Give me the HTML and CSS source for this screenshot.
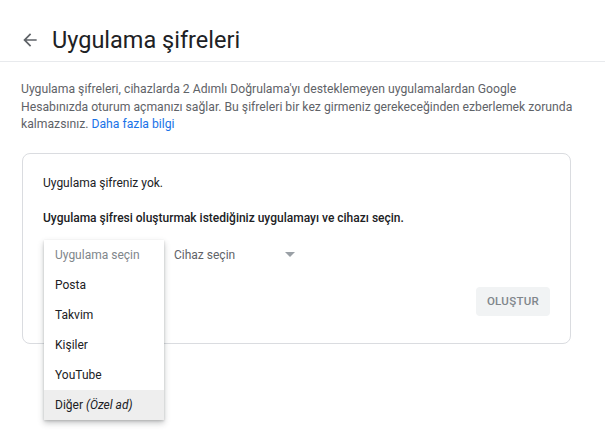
FILE: index.html
```html
<!DOCTYPE html>
<html lang="tr">
<head>
<meta charset="utf-8">
<title>Uygulama şifreleri</title>
<link rel="stylesheet" href="styles.css">
</head>
<body>
<header class="header">
  <svg class="back" width="20" height="20" viewBox="0 0 24 24" aria-hidden="true"><path d="M20 11H7.83l5.59-5.59L12 4l-8 8 8 8 1.41-1.41L7.83 13H20v-2z" fill="#5f6368"/></svg>
  <h1 class="title">Uygulama şifreleri</h1>
</header>
<main class="main">
  <p class="intro">Uygulama şifreleri, cihazlarda 2 Adımlı Doğrulama'yı desteklemeyen uygulamalardan Google Hesabınızda oturum açmanızı sağlar. Bu şifreleri bir kez girmeniz gerekeceğinden ezberlemek zorunda kalmazsınız. <a class="link" href="#">Daha fazla bilgi</a></p>
  <section class="card">
    <p class="none">Uygulama şifreniz yok.</p>
    <p class="prompt">Uygulama şifresi oluşturmak istediğiniz uygulamayı ve cihazı seçin.</p>
    <div class="selects">
      <div class="select app">
        <ul class="menu">
          <li class="item placeholder">Uygulama seçin</li>
          <li class="item">Posta</li>
          <li class="item">Takvim</li>
          <li class="item">Kişiler</li>
          <li class="item">YouTube</li>
          <li class="item active">Diğer <i>(Özel ad)</i></li>
        </ul>
      </div>
      <div class="select device">
        <span>Cihaz seçin</span>
        <span class="caret"></span>
      </div>
    </div>
    <div class="actions">
      <button class="btn" disabled>OLUŞTUR</button>
    </div>
  </section>
</main>
</body>
</html>
```
FILE: styles.css
```css
* { box-sizing: border-box; }
html, body { margin: 0; padding: 0; background: #fff; }
body { min-height: 431px; font-family: Roboto, "Noto Sans", Arial, sans-serif; color: #202124; }

.header {
  display: flex;
  align-items: center;
  height: 62px;
  padding: 18px 0 0 20px;
  border-bottom: 1px solid #e8eaed;
}
.back { margin-right: 12px; flex: none; }
.title {
  margin: 0;
  font-size: 23.5px;
  font-weight: 400;
  color: #202124;
}

.main { padding: 19px 30px 100px 21px; }
.intro {
  margin: 0;
  font-size: 12.2px;
  line-height: 17.5px;
  color: #5f6368;
}
.link { color: #1a73e8; text-decoration: none; }

.card {
  margin: 19px 0 0 1px;
  width: 549px;
  border: 1px solid #dadce0;
  border-radius: 8px;
  padding: 21px 20px 27px 20px;
}
.none { margin: 0; font-size: 12px; line-height: 17px; color: #202124; }
.prompt { margin: 18px 0 0 0; font-size: 12px; line-height: 17px; font-weight: 500; color: #202124; }

.selects { display: flex; margin-top: 13px; height: 30px; }
.select { position: relative; height: 30px; display: flex; align-items: center; font-size: 12px; }
.app { width: 120px; margin-left: 1px; }
.device { width: 121px; margin-left: 10px; color: #5f6368; justify-content: space-between; }
.caret {
  width: 0; height: 0;
  border-left: 5px solid transparent;
  border-right: 5px solid transparent;
  border-top: 5px solid #9aa0a6;
}

.menu {
  position: absolute;
  top: 0; left: 0;
  width: 120px;
  margin: 0; padding: 0;
  list-style: none;
  background: #fff;
  box-shadow: 0 3px 6px rgba(60,64,67,0.3), 0 1px 2px rgba(60,64,67,0.2);
  z-index: 2;
}
.item {
  height: 30px;
  line-height: 30px;
  padding-left: 11px;
  font-size: 12px;
  color: #202124;
  white-space: nowrap;
}
.placeholder { color: #80868b; }
.active { background: #eeeeee; }

.actions { display: flex; justify-content: flex-end; margin-top: 17px; }
.btn {
  width: 74px; height: 29px;
  border: none;
  border-radius: 4px;
  background: #f1f3f4;
  color: #80868b;
  font-family: Roboto, Arial, sans-serif;
  font-size: 11.5px;
  font-weight: 500;
  letter-spacing: 0.3px;
  padding: 0;
}
```
